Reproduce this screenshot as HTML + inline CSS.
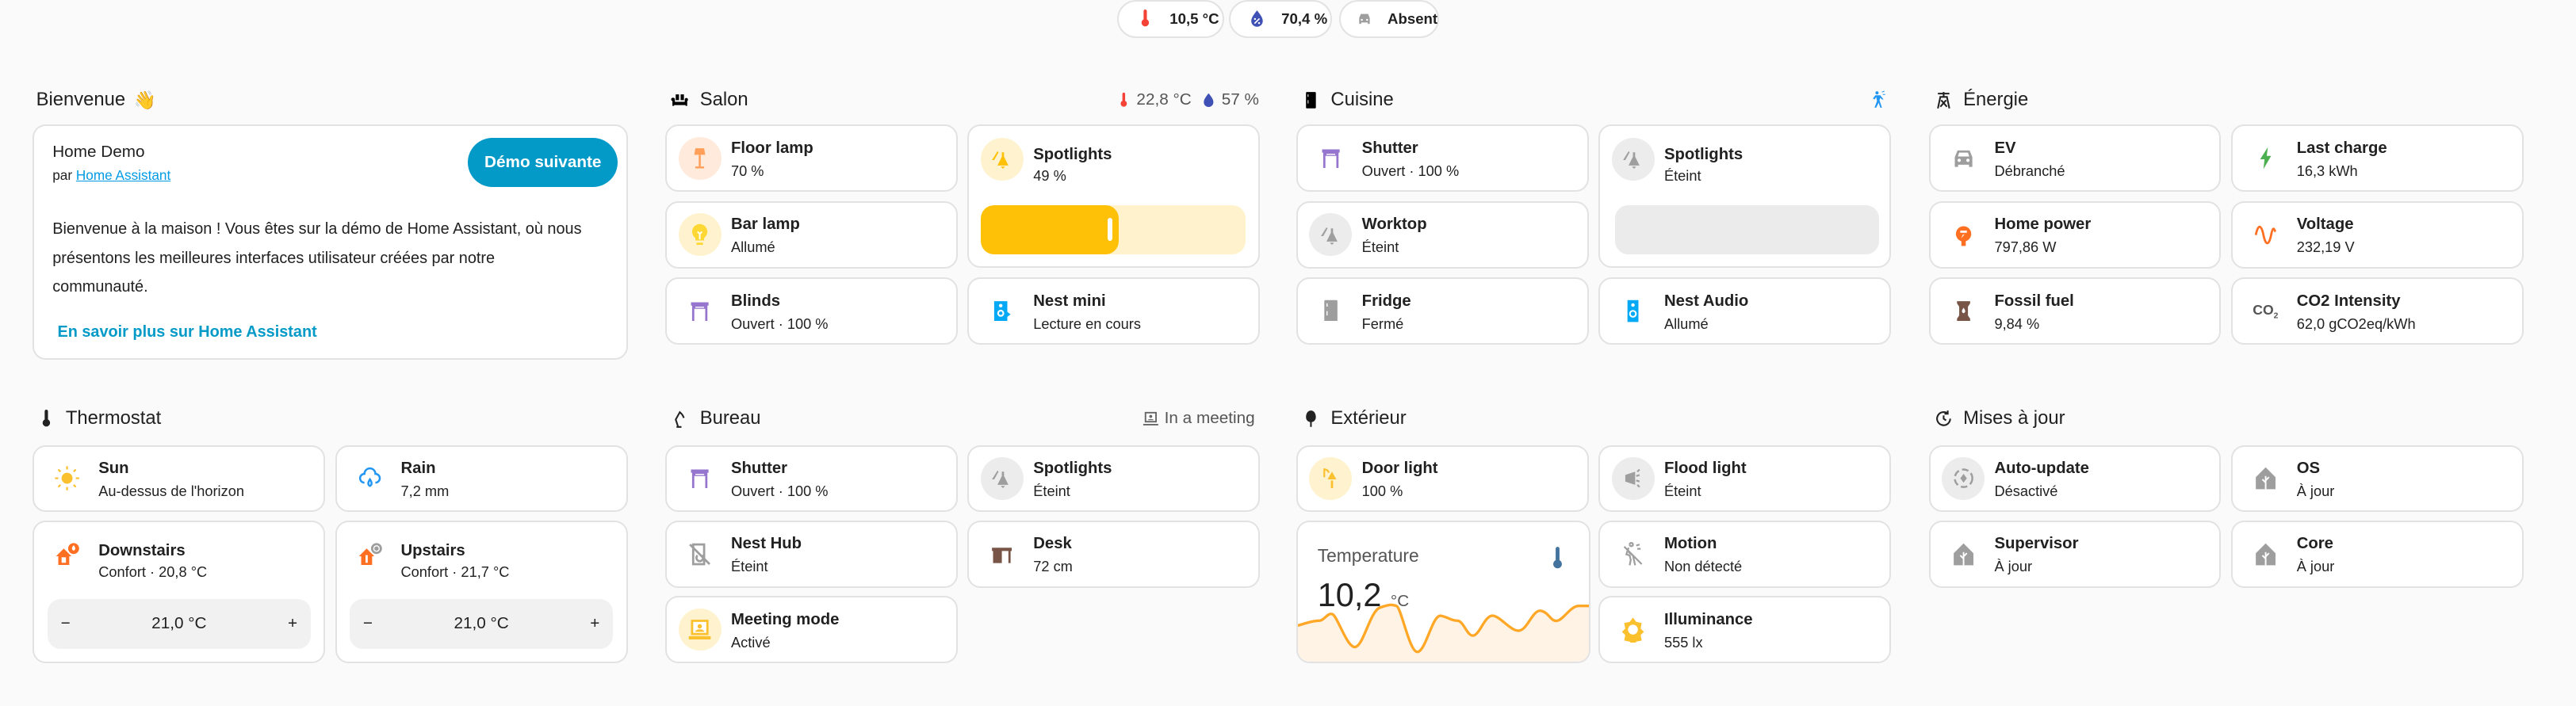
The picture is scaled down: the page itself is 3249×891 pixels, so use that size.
<!DOCTYPE html>
<html><head><meta charset="utf-8">
<style>
*{box-sizing:border-box;margin:0;padding:0}
html,body{width:3249px;height:891px;overflow:hidden;background:#fafafa}
#root{zoom:2.0721;width:1568px;height:430px;position:relative;font-family:"Liberation Sans",Arial,sans-serif;color:#212121}
.badge{position:absolute;top:0;height:23px;border:1px solid #e3e3e3;border-radius:12px;background:#fff;display:flex;align-items:center;font-size:9px;font-weight:bold;padding-left:10px}
.badge svg{width:12px;height:12px;margin-right:9px}
.title{position:absolute;font-size:11.5px;display:flex;align-items:center;height:16px}
.title svg{width:12px;height:12px;margin-right:6px}
.hdr-r{position:absolute;font-size:10px;color:#555;display:flex;align-items:center;height:16px}
.card{position:absolute;background:#fff;border:1px solid #e2e2e2;border-radius:8px;overflow:hidden}
.tile{position:absolute;background:#fff;border:1px solid #e2e2e2;border-radius:8px;width:178px;height:41px}
.ic{position:absolute;left:7px;top:6.5px;width:26px;height:26px;border-radius:50%;display:flex;align-items:center;justify-content:center}
.ic svg{width:16px;height:16px}
.nm{position:absolute;left:39px;top:8px;font-size:9.8px;font-weight:bold;white-space:nowrap}
.st{position:absolute;left:39px;top:22px;font-size:8.8px;white-space:nowrap;color:#222}
.ctl{position:absolute;left:8px;right:8px;bottom:8px;height:30px;border-radius:8px;background:#f1f1f1;display:flex;align-items:center;justify-content:space-between;padding:0 8px;font-size:10px}
</style></head><body><div id="root">

<!-- badges -->
<div class="badge" style="left:680px;width:65px"><svg viewBox="0 0 24 24"><path fill="#f44336" d="M10 3a2 2 0 0 1 4 0v10a4.5 4.5 0 1 1-4 0z"/></svg>10,5 °C</div>
<div class="badge" style="left:748px;width:63px"><svg viewBox="0 0 24 24"><path fill="#3f51b5" d="M12 2c-4 5-7 9-7 13a7 7 0 0 0 14 0c0-4-3-8-7-13z"/><path stroke="#fff" stroke-width="1.6" d="M9 18l6-6"/><circle cx="9.5" cy="12.5" r="1.2" fill="#fff"/><circle cx="14.5" cy="17.5" r="1.2" fill="#fff"/></svg>70,4 %</div>
<div class="badge" style="left:815px;width:61px"><svg viewBox="0 0 24 24"><path fill="#9e9e9e" d="M4 11l2.5-6h11l2.5 6v9h-3v-2H7v2H4z"/><circle cx="8" cy="14" r="1.5" fill="#fff"/><circle cx="16" cy="14" r="1.5" fill="#fff"/></svg>Absent</div>

<!-- ===== Bienvenue ===== -->
<div class="title" style="left:22px;top:53px">Bienvenue <span style="margin-left:5px;font-size:11px">👋</span></div>
<div class="card" style="left:20px;top:76px;width:362px;height:143px">
  <div style="position:absolute;left:11px;top:10px;font-size:10px">Home Demo</div>
  <div style="position:absolute;left:11px;top:25px;font-size:8.3px">par <span style="color:#039be5;text-decoration:underline">Home Assistant</span></div>
  <div style="position:absolute;left:264px;top:7px;width:91px;height:30px;border-radius:15px;background:#039ac8;color:#fff;font-size:10px;font-weight:bold;display:flex;align-items:center;justify-content:center">Démo suivante</div>
  <div style="position:absolute;left:11px;top:54px;width:350px;font-size:9.6px;line-height:17.5px;white-space:nowrap">Bienvenue à la maison ! Vous êtes sur la démo de Home Assistant, où nous<br>présentons les meilleures interfaces utilisateur créées par notre<br>communauté.</div>
  <div style="position:absolute;left:14px;top:120px;font-size:9.6px;color:#039ac8;font-weight:bold">En savoir plus sur Home Assistant</div>
</div>

<!-- ===== Salon ===== -->
<div class="title" style="left:408px;top:53px"><svg viewBox="0 0 24 24"><path d="M4 9a2 2 0 0 1 2 2v3h12v-3a2 2 0 1 1 3 2v6h-2v-1H5v1H3v-6a2 2 0 0 1 1-4zm3-4h4v7H7zm6 0h4v7h-4z"/></svg>Salon</div>
<div class="hdr-r" style="left:679px;top:53px"><svg viewBox="0 0 24 24" width="10" height="12"><path fill="#f44336" d="M10 3a2 2 0 0 1 4 0v10a4.5 4.5 0 1 1-4 0z"/></svg>&nbsp;22,8 °C&nbsp;&nbsp;<svg viewBox="0 0 24 24" width="10" height="11"><path fill="#3f51b5" d="M12 2c-4 5-7 9-7 13a7 7 0 0 0 14 0c0-4-3-8-7-13z"/></svg>&nbsp;57 %</div>

<div class="tile" style="left:405px;top:76px"><div class="ic" style="background:#ffeadb"><svg viewBox="0 0 24 24"><path fill="#ff9f5a" d="M8 3h8l1 6H7z"/><path stroke="#ff9f5a" stroke-width="1.8" d="M12 9v11M8 20.5h8"/></svg></div><div class="nm">Floor lamp</div><div class="st">70 %</div></div>
<div class="tile" style="left:405px;top:122.5px"><div class="ic" style="background:#fff3cf"><svg viewBox="0 0 24 24"><path fill="#fdd835" d="M12 2a7 7 0 0 0-4 12.7V17h8v-2.3A7 7 0 0 0 12 2zM9 19h6v2H9z"/><path stroke="#fff" stroke-width="1.4" fill="none" d="M10 9l2 2 2-2M12 11v5"/></svg></div><div class="nm">Bar lamp</div><div class="st">Allumé</div></div>
<div class="tile" style="left:405px;top:169px"><div class="ic"><svg viewBox="0 0 24 24"><path fill="#9575cd" d="M4 4h16v3h-1v14h-2V10H7v11H5V7H4z"/><path fill="#fff" d="M8 8h8v1H8z"/></svg></div><div class="nm">Blinds</div><div class="st">Ouvert · 100 %</div></div>

<div class="tile" style="left:589px;top:76px;height:87px"><div class="ic" style="background:#fff3cf;top:7px"><svg viewBox="0 0 24 24"><path fill="#ffc107" d="M12 6h2v4l4 8H8l4-8zM3 13l5-8 1 1-4 7zM11 19h4l-2 2z"/></svg></div><div class="nm" style="top:12px">Spotlights</div><div class="st" style="top:25px">49 %</div>
<div style="position:absolute;left:7px;top:48px;width:161px;height:30px;border-radius:8px;background:#fff2cc;overflow:hidden"><div style="width:84px;height:100%;background:#ffc107;border-radius:8px"></div><div style="position:absolute;left:77px;top:8px;width:3px;height:14px;background:#fff;border-radius:2px"></div></div></div>
<div class="tile" style="left:589px;top:169px"><div class="ic"><svg viewBox="0 0 24 24"><path fill="#03a9f4" d="M5 3h12v18H5z"/><circle cx="11" cy="7" r="1.6" fill="#fff"/><circle cx="11" cy="14" r="3.2" fill="#fff"/><circle cx="11" cy="14" r="1.6" fill="#03a9f4"/><path fill="#03a9f4" d="M16 12l4 3-4 3z"/></svg></div><div class="nm">Nest mini</div><div class="st">Lecture en cours</div></div>

<!-- ===== Cuisine ===== -->
<div class="title" style="left:792px;top:53px"><svg viewBox="0 0 24 24"><path d="M7 2h10a1 1 0 0 1 1 1v18a1 1 0 0 1-1 1H7a1 1 0 0 1-1-1V3a1 1 0 0 1 1-1zm1 3v3h1V5zm0 7v4h1v-4zM6 10h12v1H6z"/></svg>Cuisine</div>
<svg style="position:absolute;left:1137px;top:54px;width:12px;height:13px" viewBox="0 0 24 24"><path fill="#2196f3" d="M11 2a2 2 0 1 1 0 4 2 2 0 0 1 0-4zM9 7l-3 4 2 1 2-3 1 5-3 8h2l3-6 2 6h2l-3-9 1-3 2 2h2l-4-5z"/><path stroke="#2196f3" d="M17 3l3-1M18 6l3 0"/></svg>
<div class="tile" style="left:789px;top:76px"><div class="ic"><svg viewBox="0 0 24 24"><path fill="#9575cd" d="M4 4h16v3h-1v14h-2V10H7v11H5V7H4z"/><path fill="#fff" d="M8 8h8v1H8z"/></svg></div><div class="nm">Shutter</div><div class="st">Ouvert · 100 %</div></div>
<div class="tile" style="left:789px;top:122.5px"><div class="ic" style="background:#ececec"><svg viewBox="0 0 24 24"><path fill="#9e9e9e" d="M12 6h2v4l4 8H8l4-8zM3 13l5-8 1 1-4 7zM11 19h4l-2 2z"/></svg></div><div class="nm">Worktop</div><div class="st">Éteint</div></div>
<div class="tile" style="left:789px;top:169px"><div class="ic"><svg viewBox="0 0 24 24"><path fill="#9e9e9e" d="M7 2h10a1 1 0 0 1 1 1v18H6V3a1 1 0 0 1 1-1zM6 10h12v1H6z"/><path fill="#fff" d="M8 5h1v3H8zM8 12h1v4H8z"/></svg></div><div class="nm">Fridge</div><div class="st">Fermé</div></div>
<div class="tile" style="left:973px;top:76px;height:87px"><div class="ic" style="background:#ececec;top:7px"><svg viewBox="0 0 24 24"><path fill="#9e9e9e" d="M12 6h2v4l4 8H8l4-8zM3 13l5-8 1 1-4 7zM11 19h4l-2 2z"/></svg></div><div class="nm" style="top:12px">Spotlights</div><div class="st" style="top:25px">Éteint</div>
<div style="position:absolute;left:9px;top:48px;width:161px;height:30px;border-radius:8px;background:#ebebeb"></div></div>
<div class="tile" style="left:973px;top:169px"><div class="ic"><svg viewBox="0 0 24 24"><path fill="#03a9f4" d="M7 2h10v20H7z"/><circle cx="12" cy="6.5" r="1.6" fill="#fff"/><circle cx="12" cy="14.5" r="3.5" fill="#fff"/><circle cx="12" cy="14.5" r="2" fill="#03a9f4"/></svg></div><div class="nm">Nest Audio</div><div class="st">Allumé</div></div>

<!-- ===== Énergie ===== -->
<div class="title" style="left:1177px;top:53px"><svg viewBox="0 0 24 24"><path stroke="#222" stroke-width="2" fill="none" d="M5 4h14M7 8h10M12 2v5M8 8l-3 14M16 8l3 14M9 12l7 8M15 12l-7 8"/></svg>Énergie</div>
<div class="tile" style="left:1174px;top:76px"><div class="ic"><svg viewBox="0 0 24 24"><path fill="#9e9e9e" d="M4 11l2.5-6h11l2.5 6v9h-3v-2H7v2H4z"/><circle cx="8" cy="14" r="1.5" fill="#fff"/><circle cx="16" cy="14" r="1.5" fill="#fff"/><path fill="#fff" d="M8 7h8l1.2 3.5H6.8z"/></svg></div><div class="nm">EV</div><div class="st">Débranché</div></div>
<div class="tile" style="left:1174px;top:122.5px"><div class="ic"><svg viewBox="0 0 24 24"><circle cx="12" cy="11" r="7" fill="#ff6f22"/><path fill="#ff6f22" d="M10 17h4v5h-4z"/><path fill="#fff" d="M9 8h6v2H9zM13 11l-3 4 1-3z"/></svg></div><div class="nm">Home power</div><div class="st">797,86 W</div></div>
<div class="tile" style="left:1174px;top:169px"><div class="ic"><svg viewBox="0 0 24 24"><path fill="#795548" d="M6 3h12v2l-2 3v8l2 3v2H6v-2l2-3V8L6 5z"/><path fill="#fff" d="M12 9c-2 3-2 4 0 5 2-1 2-2 0-5z"/></svg></div><div class="nm">Fossil fuel</div><div class="st">9,84 %</div></div>
<div class="tile" style="left:1358px;top:76px"><div class="ic"><svg viewBox="0 0 24 24"><path fill="#4caf50" d="M14 2L7 13h4l-1 9 7-12h-4z"/></svg></div><div class="nm">Last charge</div><div class="st">16,3 kWh</div></div>
<div class="tile" style="left:1358px;top:122.5px"><div class="ic"><svg viewBox="0 0 24 24"><path stroke="#ff6f22" stroke-width="2" fill="none" d="M3 12c2-10 5-10 7 0s5 10 7 0 3-4 4-3"/></svg></div><div class="nm">Voltage</div><div class="st">232,19 V</div></div>
<div class="tile" style="left:1358px;top:169px"><div class="ic"><span style="font-size:8.5px;font-weight:bold;color:#555">CO<sub style="font-size:5px">2</sub></span></div><div class="nm">CO2 Intensity</div><div class="st">62,0 gCO2eq/kWh</div></div>

<!-- ===== Thermostat ===== -->
<div class="title" style="left:22px;top:247px"><svg viewBox="0 0 24 24"><path fill="#222" d="M10 3a2 2 0 0 1 4 0v10a4.5 4.5 0 1 1-4 0z"/></svg>Thermostat</div>
<div class="tile" style="left:20px;top:271px"><div class="ic"><svg viewBox="0 0 24 24"><circle cx="12" cy="12" r="5" fill="#fbc02d"/><path stroke="#fbc02d" stroke-width="1.6" d="M12 1v3M12 20v3M1 12h3M20 12h3M4 4l2 2M18 18l2 2M4 20l2-2M18 6l2-2"/></svg></div><div class="nm">Sun</div><div class="st">Au-dessus de l'horizon</div></div>
<div class="tile" style="left:204px;top:271px"><div class="ic"><svg viewBox="0 0 24 24"><path stroke="#2196f3" stroke-width="1.8" fill="none" d="M7 16a4 4 0 0 1 0-8 5 5 0 0 1 10 0 4 4 0 0 1 0 8M12 13c-2 3-2 5 0 6 2-1 2-3 0-6z"/></svg></div><div class="nm">Rain</div><div class="st">7,2 mm</div></div>
<div class="tile" style="left:20px;top:317px;height:87px"><div class="ic" style="top:7px"><svg viewBox="0 0 24 24"><path fill="#ff6f22" d="M2 13l7-7 7 7h-2v8H4v-8z"/><path fill="#fff" d="M7 14h4v5H7z"/><circle cx="18" cy="6" r="5" fill="#ff6f22"/><path fill="#fff" d="M18 3c-2 2-2 4 0 5 2-1 2-3 0-5z"/></svg></div><div class="nm" style="top:12px">Downstairs</div><div class="st" style="top:25px">Confort · 20,8 °C</div>
<div class="ctl"><span>−</span><span>21,0 °C</span><span>+</span></div></div>
<div class="tile" style="left:204px;top:317px;height:87px"><div class="ic" style="top:7px"><svg viewBox="0 0 24 24"><path fill="#ff6f22" d="M2 13l7-7 7 7h-2v8H4v-8z"/><path fill="#fff" d="M8 12h2v7H8z"/><circle cx="18" cy="6" r="5" fill="#9e9e9e"/><circle cx="18" cy="6" r="3" fill="#fff"/><circle cx="18" cy="6" r="2" fill="#9e9e9e"/></svg></div><div class="nm" style="top:12px">Upstairs</div><div class="st" style="top:25px">Confort · 21,7 °C</div>
<div class="ctl"><span>−</span><span>21,0 °C</span><span>+</span></div></div>

<!-- ===== Bureau ===== -->
<div class="title" style="left:408px;top:247px"><svg viewBox="0 0 24 24"><path stroke="#222" stroke-width="2" fill="none" d="M8 22h6M10 22l-3-9 5-9 3 3M15 7l2 4"/></svg>Bureau</div>
<div class="hdr-r" style="left:695px;top:247px"><svg viewBox="0 0 24 24" width="11" height="11"><path fill="#666" d="M4 3h16v14H4zM2 19h20v2H2z"/><path fill="#fff" d="M6 5h12v10H6z"/><circle cx="12" cy="9" r="2" fill="#666"/><path fill="#666" d="M8 14c0-2 8-2 8 0z"/></svg>&nbsp;In a meeting</div>
<div class="tile" style="left:405px;top:271px"><div class="ic"><svg viewBox="0 0 24 24"><path fill="#9575cd" d="M4 4h16v3h-1v14h-2V10H7v11H5V7H4z"/><path fill="#fff" d="M8 8h8v1H8z"/></svg></div><div class="nm">Shutter</div><div class="st">Ouvert · 100 %</div></div>
<div class="tile" style="left:405px;top:317px"><div class="ic"><svg viewBox="0 0 24 24"><path stroke="#9e9e9e" stroke-width="2" fill="none" d="M6 3h10v18H6zM3 3l18 18M10 13a3 3 0 1 0 4 0"/></svg></div><div class="nm">Nest Hub</div><div class="st">Éteint</div></div>
<div class="tile" style="left:405px;top:363px"><div class="ic" style="background:#fff3cf"><svg viewBox="0 0 24 24"><path fill="#fbc02d" d="M4 3h16v14H4zM2 18h20v3H2z"/><path fill="#fff" d="M6 5h12v10H6z"/><circle cx="12" cy="9" r="2" fill="#fbc02d"/><path fill="#fbc02d" d="M8 14c0-3 8-3 8 0z"/></svg></div><div class="nm">Meeting mode</div><div class="st">Activé</div></div>
<div class="tile" style="left:589px;top:271px"><div class="ic" style="background:#ececec"><svg viewBox="0 0 24 24"><path fill="#9e9e9e" d="M12 6h2v4l4 8H8l4-8zM3 13l5-8 1 1-4 7zM11 19h4l-2 2z"/></svg></div><div class="nm">Spotlights</div><div class="st">Éteint</div></div>
<div class="tile" style="left:589px;top:317px"><div class="ic"><svg viewBox="0 0 24 24"><path fill="#795548" d="M3 6h18v3h-1v11h-2V9h-6v11H4V9H3z"/><path fill="#fff" d="M14 11h3v2h-3zM14 15h3v2h-3z"/></svg></div><div class="nm">Desk</div><div class="st">72 cm</div></div>

<!-- ===== Extérieur ===== -->
<div class="title" style="left:792px;top:247px"><svg viewBox="0 0 24 24"><path fill="#222" d="M12 2c4 0 6 4 6 8s-3 6-5 6v6h-2v-6c-2 0-5-2-5-6s2-8 6-8z"/></svg>Extérieur</div>
<div class="tile" style="left:789px;top:271px"><div class="ic" style="background:#fff3cf"><svg viewBox="0 0 24 24"><path fill="#fbc02d" d="M13 6l4 7H9zM12 14h2v7h-2z"/><path stroke="#fbc02d" stroke-width="1.6" fill="none" d="M6 3v8M6 4c3 0 4 2 4 3"/></svg></div><div class="nm">Door light</div><div class="st">100 %</div></div>
<div class="tile" style="left:973px;top:271px"><div class="ic" style="background:#ececec"><svg viewBox="0 0 24 24"><path fill="#9e9e9e" d="M5 9l9-3v12l-9-3z"/><path stroke="#9e9e9e" stroke-width="1.6" d="M15 10l3-1M15 14l3 1M16 6l2-2M16 18l2 2"/></svg></div><div class="nm">Flood light</div><div class="st">Éteint</div></div>
<div class="card" style="left:789px;top:317px;width:179px;height:87px;border-radius:8px">
  <div style="position:absolute;left:12px;top:14px;font-size:11px;color:#555">Temperature</div>
  <svg style="position:absolute;left:151px;top:14px;width:14px;height:16px" viewBox="0 0 24 24"><path fill="#44739e" d="M10 2a2 2 0 0 1 4 0v12a4.5 4.5 0 1 1-4 0z"/></svg>
  <div style="position:absolute;left:12px;top:33px;font-size:20px">10,2 <span style="font-size:10px;color:#555">°C</span></div>
  <svg style="position:absolute;left:0;top:0" width="179" height="87" viewBox="0 0 179 87">
    <path fill="#fff3e6" d="M0 63C6 61 10 60 13 60S18 55 21 56 30 77 35 76 44 54 50 52 57 50 60 51 68 80 73 79 82 56 87 57 93 60 97 60 103 70 107 69 114 56 119 57 130 67 135 66 143 53 148 54 154 61 158 60 166 51 171 51 180 51 180 51V87H0z"/>
    <path fill="none" stroke="#ffa726" stroke-width="1.6" d="M0 63C6 61 10 60 13 60S18 55 21 56 30 77 35 76 44 54 50 52 57 50 60 51 68 80 73 79 82 56 87 57 93 60 97 60 103 70 107 69 114 56 119 57 130 67 135 66 143 53 148 54 154 61 158 60 166 51 171 51 180 51 180 51"/>
  </svg>
</div>
<div class="tile" style="left:973px;top:317px"><div class="ic"><svg viewBox="0 0 24 24"><path stroke="#9e9e9e" stroke-width="1.6" fill="none" d="M9 3a1.5 1.5 0 1 1 0 .1M8 6l-2 6 3 1 1 4-1 5M8 10l4 3 2 9M4 5l16 16M15 4l3-1M16 7l3 0"/></svg></div><div class="nm">Motion</div><div class="st">Non détecté</div></div>
<div class="tile" style="left:973px;top:363px"><div class="ic"><svg viewBox="0 0 24 24"><path fill="#fbc02d" d="M12 1l3 4 5 1-1 5 3 3-3 3 1 5-5 1-3 4-3-4-5-1 1-5-3-3 3-3-1-5 5-1z"/><circle cx="12" cy="12" r="4.5" fill="#fff"/></svg></div><div class="nm">Illuminance</div><div class="st">555 lx</div></div>

<!-- ===== Mises à jour ===== -->
<div class="title" style="left:1177px;top:247px"><svg viewBox="0 0 24 24"><path stroke="#222" stroke-width="2" fill="none" d="M20 12a8 8 0 1 1-3-6.3M17 2v4h-4M12 8v4l3 2"/></svg>Mises à jour</div>
<div class="tile" style="left:1174px;top:271px"><div class="ic" style="background:#ececec"><svg viewBox="0 0 24 24"><circle cx="12" cy="12" r="8" stroke="#9e9e9e" stroke-width="1.8" fill="none" stroke-dasharray="6 3"/><path fill="#9e9e9e" d="M12 8l3 4-3 4-3-4z"/></svg></div><div class="nm">Auto-update</div><div class="st">Désactivé</div></div>
<div class="tile" style="left:1174px;top:317px"><div class="ic"><svg viewBox="0 0 24 24"><path fill="#9e9e9e" d="M12 2l9 9v11H3V11z"/><path stroke="#fff" stroke-width="1.4" fill="none" d="M12 22V10M12 16l-3-3M12 14l3-3"/></svg></div><div class="nm">Supervisor</div><div class="st">À jour</div></div>
<div class="tile" style="left:1358px;top:271px"><div class="ic"><svg viewBox="0 0 24 24"><path fill="#9e9e9e" d="M12 2l9 9v11H3V11z"/><path stroke="#fff" stroke-width="1.4" fill="none" d="M12 22V10M12 16l-3-3M12 14l3-3"/></svg></div><div class="nm">OS</div><div class="st">À jour</div></div>
<div class="tile" style="left:1358px;top:317px"><div class="ic"><svg viewBox="0 0 24 24"><path fill="#9e9e9e" d="M12 2l9 9v11H3V11z"/><path stroke="#fff" stroke-width="1.4" fill="none" d="M12 22V10M12 16l-3-3M12 14l3-3"/></svg></div><div class="nm">Core</div><div class="st">À jour</div></div>

</div></body></html>
